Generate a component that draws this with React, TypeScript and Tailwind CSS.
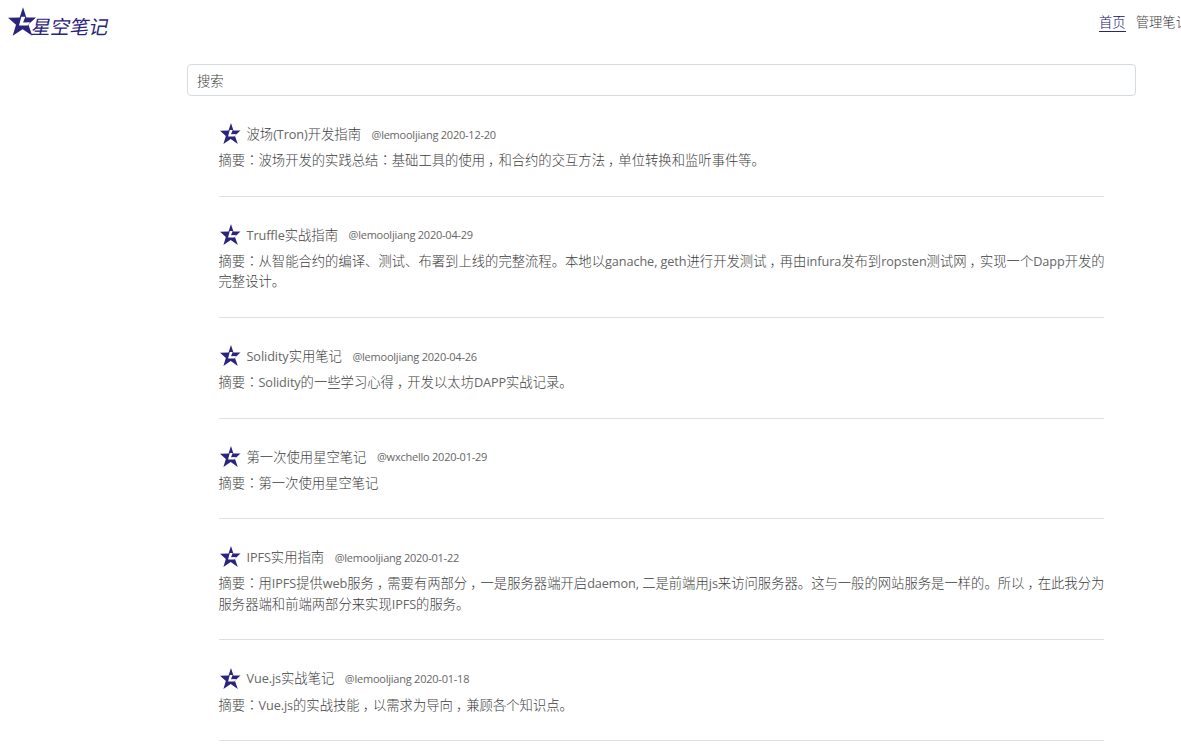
import React from 'react'

type Note = {
  title: string
  author: string
  date: string
  summary: string
}

const NOTES: Note[] = [
  {
    title: '波场(Tron)开发指南',
    author: '@lemooljiang',
    date: '2020-12-20',
    summary: '波场开发的实践总结：基础工具的使用，和合约的交互方法，单位转换和监听事件等。',
  },
  {
    title: 'Truffle实战指南',
    author: '@lemooljiang',
    date: '2020-04-29',
    summary:
      '从智能合约的编译、测试、布署到上线的完整流程。本地以ganache, geth进行开发测试，再由infura发布到ropsten测试网，实现一个Dapp开发的完整设计。',
  },
  {
    title: 'Solidity实用笔记',
    author: '@lemooljiang',
    date: '2020-04-26',
    summary: 'Solidity的一些学习心得，开发以太坊DAPP实战记录。',
  },
  {
    title: '第一次使用星空笔记',
    author: '@wxchello',
    date: '2020-01-29',
    summary: '第一次使用星空笔记',
  },
  {
    title: 'IPFS实用指南',
    author: '@lemooljiang',
    date: '2020-01-22',
    summary:
      '用IPFS提供web服务，需要有两部分，一是服务器端开启daemon, 二是前端用js来访问服务器。这与一般的网站服务是一样的。所以，在此我分为服务器端和前端两部分来实现IPFS的服务。',
  },
  {
    title: 'Vue.js实战笔记',
    author: '@lemooljiang',
    date: '2020-01-18',
    summary: 'Vue.js的实战技能，以需求为导向，兼顾各个知识点。',
  },
]

const Star = ({ className }: { className: string }) => (
  <svg viewBox="0 0 84 86" className={className}>
    <path fill="#29247c" d="M45 0 L55 31 L84 31 L61 52 L73 86 L44 66 L14 86 L24 53 L0 32 L35 31 Z" />
    <path fill="#fff" d="M40 29 L52 29 L50 34 L45 46 L66 45 L59 55 L33 55 Z" />
  </svg>
)

// Latin runs are set a little tighter than the Chinese text, the colon and comma sit mid-cell
const Mixed = ({ text }: { text: string }) => (
  <>
    {text.split(/([\x20-\x7e]+|：|，)/).map((run, i) => {
      if (run === '：') return <span key={i} className="font-['Noto_Sans_CJK_JP',sans-serif]" lang="ja">{run}</span>
      if (run === '，') return <span key={i} className="-mr-[3px] pl-[3px]">{run}</span>
      if (/^[\x20-\x7e]+$/.test(run)) return <span key={i} className="text-[12.7px] font-normal tracking-[-0.09px] text-[#666]">{run}</span>
      return <React.Fragment key={i}>{run}</React.Fragment>
    })}
  </>
)

const NoteItem = ({ note }: { note: Note }) => (
  <article className="border-b border-[#dfdfdf] pt-[28px] pb-[25px]">
    <div className="flex h-[20.2px] items-center">
      <Star className="-mt-px ml-[1.5px] h-[21px] w-[20.5px] shrink-0" />
      <h2 className="ml-[6px] whitespace-nowrap">
        <Mixed text={note.title} />
      </h2>
      <span className="ml-[10.5px] whitespace-nowrap pt-[1.5px] text-[11px] font-normal tracking-[-0.23px] text-[#666]">
        {note.author} {note.date}
      </span>
    </div>
    <p className="-mr-[4px] mt-[6px] leading-[20.5px]">
      <Mixed text={`摘要：${note.summary}`} />
    </p>
  </article>
)

export default function App() {
  return (
    <div
      lang="zh-CN"
      className="h-[749px] w-full overflow-hidden bg-white font-['Open_Sans','Noto_Sans_CJK_SC',sans-serif] text-[13.33px] leading-[20.2px] font-light text-[#3c3c3c]"
    >
      <header className="flex h-[64px] items-start justify-between overflow-hidden">
        <a className="flex pl-[8px] pt-[7px] text-[#29247c]">
          <Star className="h-[29px] w-[28px] shrink-0" />
          <span className="-ml-[4px] mt-[10px] -skew-x-12 whitespace-nowrap text-[19.2px] leading-[20px] font-normal">星空笔记</span>
        </a>
        <nav className="-mr-[8px] flex gap-[10px] whitespace-nowrap pt-[12px]">
          <a className="h-[20px] border-b border-[#29247c] text-[#120c70]">首页</a>
          <a>管理笔记</a>
        </nav>
      </header>

      <main className="ml-[187px] w-[949px]">
        <input
          type="text"
          placeholder="搜索"
          className="block h-[32px] w-full rounded-[4px] border border-[#d4dce0] px-[9px] pt-[2px] placeholder:text-[#3c3c3c]"
        />
        <section className="ml-[31.5px] w-[885.5px]">
          {NOTES.map((note) => (
            <NoteItem key={note.title} note={note} />
          ))}
        </section>
      </main>
    </div>
  )
}
